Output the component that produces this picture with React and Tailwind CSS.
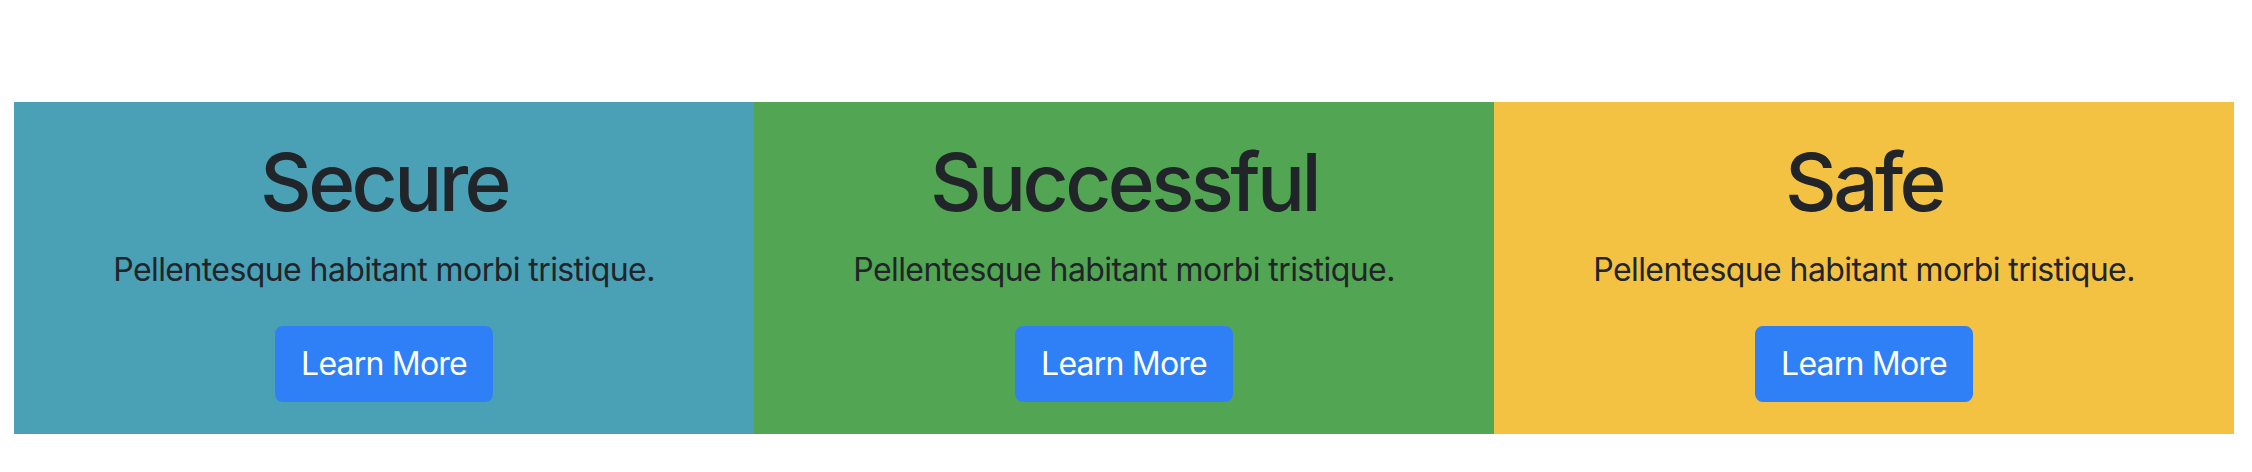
import React from "react";

const FEATURES = [
	{ title: "Secure", bg: "bg-[#4aa0b5]" },
	{ title: "Successful", bg: "bg-[#52a552]" },
	{ title: "Safe", bg: "bg-[#f4c242]" },
];

const FeatureCard = ({ title, bg }) => (
	<div className={`flex flex-col items-center pt-8 pb-8 text-center ${bg}`}>
		<h1 className="mb-4 text-[80px] leading-[96px] font-medium tracking-[-0.045em] text-[#212529]">
			{title}
		</h1>
		<p className="mb-8 text-[32px] leading-[48px] tracking-[-0.018em] text-[#212529]">
			Pellentesque habitant morbi tristique.
		</p>
		<button className="rounded-lg border-2 border-[#2f80f6] bg-[#2f80f6] px-6 py-3 text-[32px] leading-[48px] tracking-[-0.025em] text-white">
			Learn More
		</button>
	</div>
);

export default function App() {
	return (
		<div
			className="h-[472px] w-full bg-white pt-[102px]"
			style={{ fontFamily: "Inter, 'Liberation Sans', sans-serif" }}
		>
			<div className="ml-[14px] grid w-[2220px] grid-cols-3">
				{FEATURES.map((f) => (
					<FeatureCard key={f.title} {...f} />
				))}
			</div>
		</div>
	);
}
